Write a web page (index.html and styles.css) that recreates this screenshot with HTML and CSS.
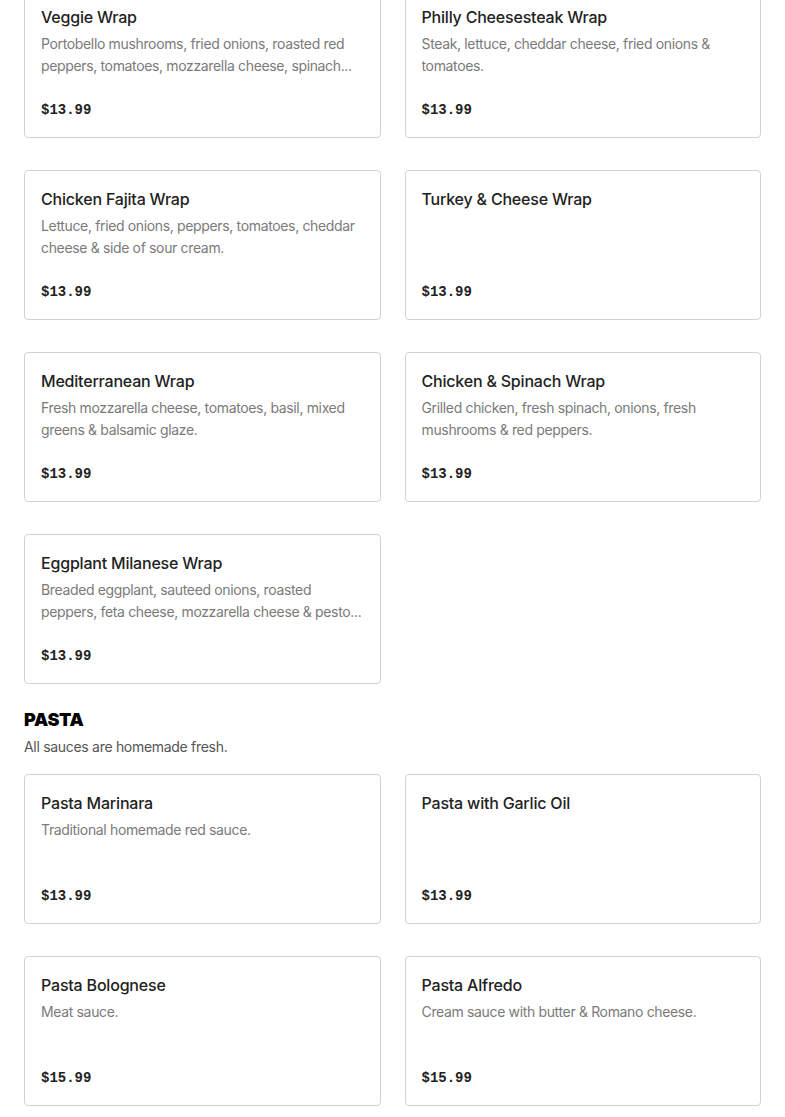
FILE: index.html
```html
<!DOCTYPE html>
<html lang="en">
<head>
<meta charset="utf-8">
<title>Menu</title>
<link rel="stylesheet" href="styles.css">
</head>
<body>
<main class="menu">
  <section class="section section--scrolled">
    <div class="grid">
      <article class="card">
        <h3 class="card__title">Veggie Wrap</h3>
        <p class="card__desc">Portobello mushrooms, fried onions, roasted red peppers, tomatoes, mozzarella cheese, spinach...</p>
        <div class="card__price">$13.99</div>
      </article>
      <article class="card">
        <h3 class="card__title">Philly Cheesesteak Wrap</h3>
        <p class="card__desc">Steak, lettuce, cheddar cheese, fried onions &amp; tomatoes.</p>
        <div class="card__price">$13.99</div>
      </article>
      <article class="card">
        <h3 class="card__title">Chicken Fajita Wrap</h3>
        <p class="card__desc">Lettuce, fried onions, peppers, tomatoes, cheddar cheese &amp; side of sour cream.</p>
        <div class="card__price">$13.99</div>
      </article>
      <article class="card">
        <h3 class="card__title">Turkey &amp; Cheese Wrap</h3>
        <p class="card__desc"></p>
        <div class="card__price">$13.99</div>
      </article>
      <article class="card">
        <h3 class="card__title">Mediterranean Wrap</h3>
        <p class="card__desc">Fresh mozzarella cheese, tomatoes, basil, mixed greens &amp; balsamic glaze.</p>
        <div class="card__price">$13.99</div>
      </article>
      <article class="card">
        <h3 class="card__title">Chicken &amp; Spinach Wrap</h3>
        <p class="card__desc">Grilled chicken, fresh spinach, onions, fresh mushrooms &amp; red peppers.</p>
        <div class="card__price">$13.99</div>
      </article>
      <article class="card">
        <h3 class="card__title">Eggplant Milanese Wrap</h3>
        <p class="card__desc">Breaded eggplant, sauteed onions, roasted peppers, feta cheese, mozzarella cheese &amp; pesto...</p>
        <div class="card__price">$13.99</div>
      </article>
    </div>
  </section>

  <section class="section">
    <h2 class="section__title">PASTA</h2>
    <p class="section__desc">All sauces are homemade fresh.</p>
    <div class="grid">
      <article class="card">
        <h3 class="card__title">Pasta Marinara</h3>
        <p class="card__desc">Traditional homemade red sauce.</p>
        <div class="card__price">$13.99</div>
      </article>
      <article class="card">
        <h3 class="card__title">Pasta with Garlic Oil</h3>
        <p class="card__desc"></p>
        <div class="card__price">$13.99</div>
      </article>
      <article class="card">
        <h3 class="card__title">Pasta Bolognese</h3>
        <p class="card__desc">Meat sauce.</p>
        <div class="card__price">$15.99</div>
      </article>
      <article class="card">
        <h3 class="card__title">Pasta Alfredo</h3>
        <p class="card__desc">Cream sauce with butter &amp; Romano cheese.</p>
        <div class="card__price">$15.99</div>
      </article>
    </div>
  </section>
</main>
</body>
</html>
```

FILE: styles.css
```css
* {
  box-sizing: border-box;
}

html, body {
  margin: 0;
  padding: 0;
  background: #ffffff;
}

body {
  font-family: "Inter", "Liberation Sans", sans-serif;
  color: #222222;
}

.menu {
  padding: 0 24px;
}

.section--scrolled {
  margin-top: -12px;
}

.grid {
  display: grid;
  grid-template-columns: 1fr 1fr;
  column-gap: 24px;
  row-gap: 32px;
}

.card {
  height: 150px;
  border: 1px solid #d2d2d2;
  border-radius: 4px;
  padding: 16px 16px 15px;
  display: flex;
  flex-direction: column;
  background: #fff;
}

.card__title {
  margin: 0;
  font-size: 16px;
  line-height: 24px;
  font-weight: 500;
  color: #222;
  letter-spacing: -0.2px;
}

.card__desc {
  margin: 3.5px 0 0;
  font-size: 14px;
  line-height: 22px;
  color: #7a7a7a;
  letter-spacing: -0.35px;
  display: -webkit-box;
  -webkit-line-clamp: 2;
  -webkit-box-orient: vertical;
  overflow: hidden;
}

.card__price {
  margin-top: auto;
  font-family: "Liberation Mono", "DejaVu Sans Mono", monospace;
  font-weight: 700;
  font-size: 14px;
  line-height: 24px;
  color: #222;
}

.section__title {
  margin: 24px 0 0;
  font-size: 18px;
  line-height: 24px;
  font-weight: 900;
  color: #000;
  letter-spacing: -0.3px;
}

.section__desc {
  margin: 4px 0 16px;
  font-size: 14px;
  line-height: 22px;
  color: #555;
  letter-spacing: -0.3px;
}
```
